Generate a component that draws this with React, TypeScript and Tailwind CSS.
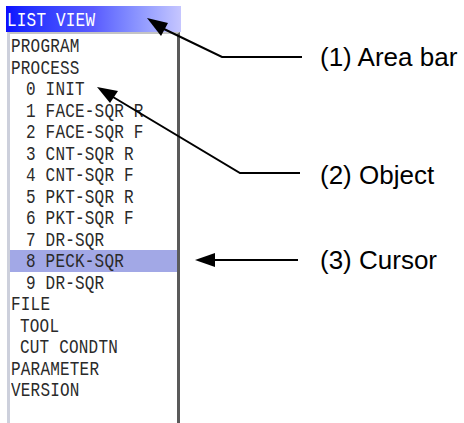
const rows: Array<{ label: string; indent: string; selected?: boolean }> = [
  { label: "PROGRAM", indent: "pl-0" },
  { label: "PROCESS", indent: "pl-0" },
  { label: "0 INIT", indent: "pl-[15px]" },
  { label: "1 FACE-SQR R", indent: "pl-[15px]" },
  { label: "2 FACE-SQR F", indent: "pl-[15px]" },
  { label: "3 CNT-SQR R", indent: "pl-[15px]" },
  { label: "4 CNT-SQR F", indent: "pl-[15px]" },
  { label: "5 PKT-SQR R", indent: "pl-[15px]" },
  { label: "6 PKT-SQR F", indent: "pl-[15px]" },
  { label: "7 DR-SQR", indent: "pl-[15px]" },
  { label: "8 PECK-SQR", indent: "pl-[15px]", selected: true },
  { label: "9 DR-SQR", indent: "pl-[15px]" },
  { label: "FILE", indent: "pl-0" },
  { label: "TOOL", indent: "pl-[9px]" },
  { label: "CUT CONDTN", indent: "pl-[9px]" },
  { label: "PARAMETER", indent: "pl-0" },
  { label: "VERSION", indent: "pl-0" },
];

// tall, thin terminal-like lettering
const mono =
  "font-['Liberation_Mono','DejaVu_Sans_Mono',monospace] text-[16px] tracking-[0.2px] inline-block whitespace-pre origin-center scale-y-[1.28]";

function ListView() {
  return (
    <div className="w-[181px] h-full pl-[6px] pt-[6px] flex flex-col">
      {/* Area bar */}
      <div className="h-[26px] bg-linear-to-r from-[#0c0cff] via-[#5a5aff] to-[#c6c6ff] leading-[26px] pl-[1px]">
        <span className={`${mono} text-white`}>LIST VIEW</span>
      </div>

      {/* List body */}
      <div className="flex-1 ml-[1px] w-[173px] bg-white border-t-2 border-t-[#c4c4c4] border-l-[3px] border-l-[#cdd0dc] border-r-[3px] border-r-[#5a5a5a] pt-[1px]">
        {rows.map((r) => (
          <div
            key={r.label}
            className={`h-[21.5px] leading-[21.5px] pl-[1px] ${r.selected ? "bg-[#a2a8e6]" : ""}`}
          >
            <div className={r.indent}>
              <span className={`${mono} text-[#2a2a2a]`}>{r.label}</span>
            </div>
          </div>
        ))}
      </div>
    </div>
  );
}

function Callouts() {
  return (
    <svg
      className="absolute inset-0 pointer-events-none"
      width={464}
      height={423}
      viewBox="0 0 464 423"
    >
      {/* (1) area bar */}
      <polyline points="164,29 222,57 302,57" fill="none" stroke="#000" strokeWidth={2} />
      <polygon points="147,18 168,23 161,36" fill="#000" />
      {/* (2) object */}
      <polyline points="113,97 240,173 300,173" fill="none" stroke="#000" strokeWidth={2} />
      <polygon points="97,87 118,91 110,103" fill="#000" />
      {/* (3) cursor */}
      <line x1={213} y1={260} x2={298} y2={260} stroke="#000" strokeWidth={2} />
      <polygon points="195,260 215,253 215,267" fill="#000" />
    </svg>
  );
}

export default function App() {
  return (
    <div className="relative w-[464px] h-[423px] bg-white flex overflow-hidden">
      <ListView />
      <div className="flex flex-col pl-[139px] pt-[42px] font-['Liberation_Sans',Arial,sans-serif] text-[26px] leading-[30px] text-black whitespace-nowrap">
        <div>(1) Area bar</div>
        <div className="mt-[88px]">(2) Object</div>
        <div className="mt-[55px]">(3) Cursor</div>
      </div>
      <Callouts />
    </div>
  );
}
